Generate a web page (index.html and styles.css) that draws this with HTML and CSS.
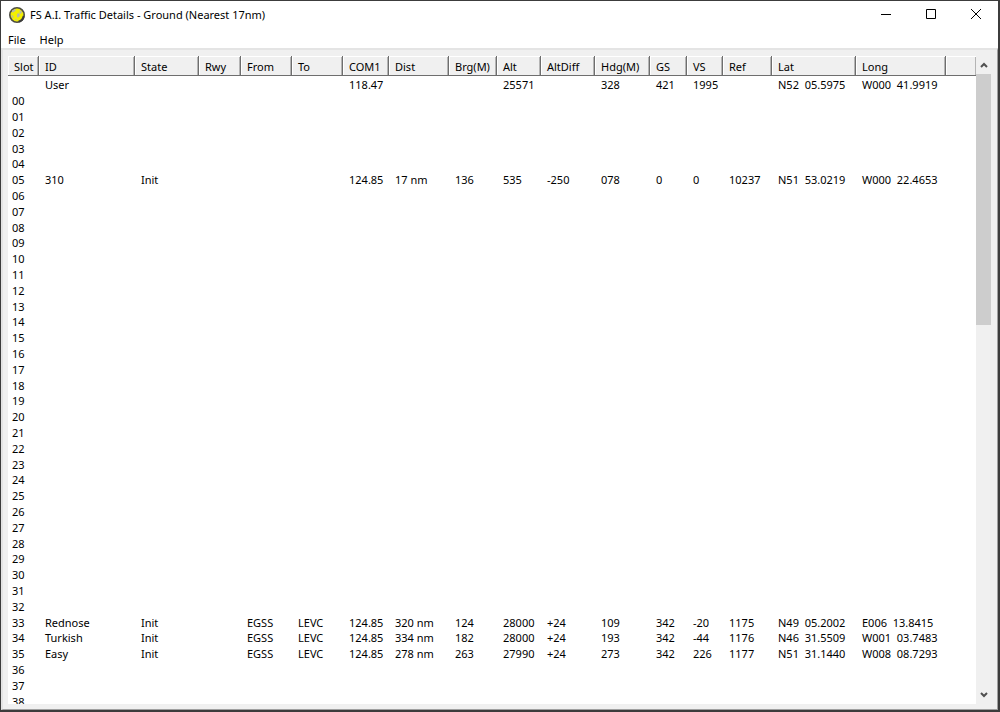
FILE: index.html
```html
<!DOCTYPE html>
<html lang="en">
<head>
<meta charset="utf-8">
<title>FS A.I. Traffic Details</title>
<link rel="stylesheet" href="styles.css">
</head>
<body>
<div class="window">
  <header class="titlebar">
    <svg class="app-icon" viewBox="0 0 16 16" aria-hidden="true">
      <circle cx="8" cy="8" r="7.2" fill="#f4f000" stroke="#4c4c44" stroke-width="1.600"/>
      <path d="M3 3.600 6 2l1 1-2 2-2 .5zM11 3l2 2-1 2-1.500-1zM2 8l2.500 1-.5 3zM8 7l2-1 1 2-1 2-2 .5zM6 12l2 .5-1 1.300z" fill="#b9b9a8"/>
      <path d="M9.500 14.600a7 7 0 0 0 5.200-5.600" fill="none" stroke="#3c3c3c" stroke-width="2"/>
    </svg>
    <h1 class="title">FS A.I. Traffic Details - Ground (Nearest 17nm)</h1>
    <div class="controls">
      <button class="control" type="button" aria-label="Minimize"><svg class="glyph" viewBox="0 0 12 12"><path d="M1 5.500h10"/></svg></button>
      <button class="control" type="button" aria-label="Maximize"><svg class="glyph" viewBox="0 0 12 12"><path d="M1.500 .5h9v9h-9z"/></svg></button>
      <button class="control" type="button" aria-label="Close"><svg class="glyph" viewBox="0 0 12 12"><path d="M1 0l10 10M11 0 1 10"/></svg></button>
    </div>
  </header>
  <nav class="menubar">
    <button class="menu" type="button">File</button>
    <button class="menu" type="button">Help</button>
  </nav>
  <main class="client">
    <div class="list">
      <table class="traffic">
        <colgroup>
          <col class="c-slot"><col class="c-id"><col class="c-state"><col class="c-rwy"><col class="c-from"><col class="c-to"><col class="c-com"><col class="c-dist"><col class="c-brg"><col class="c-alt"><col class="c-diff"><col class="c-hdg"><col class="c-gs"><col class="c-vs"><col class="c-ref"><col class="c-lat"><col class="c-long"><col>
        </colgroup>
        <thead>
          <tr><th>Slot</th><th>ID</th><th>State</th><th>Rwy</th><th>From</th><th>To</th><th>COM1</th><th>Dist</th><th>Brg(M)</th><th>Alt</th><th>AltDiff</th><th>Hdg(M)</th><th>GS</th><th>VS</th><th>Ref</th><th>Lat</th><th>Long</th><th></th></tr>
        </thead>
        <tbody id="rows"></tbody>
      </table>
    </div>
    <div class="scrollbar">
      <button class="arrow" type="button" aria-label="Scroll up"><svg class="chevron" viewBox="0 0 8 6"><path d="M1 5l3-3 3 3"/></svg></button>
      <div class="track"><div class="thumb"></div></div>
      <button class="arrow" type="button" aria-label="Scroll down"><svg class="chevron" viewBox="0 0 8 6"><path d="M1 1l3 3 3-3"/></svg></button>
    </div>
  </main>
</div>
<script src="app.js"></script>
</body>
</html>
```

FILE: styles.css
```css
* { box-sizing: border-box; }

body {
  margin: 0;
  font: 11px/16px "Noto Sans", "Open Sans", sans-serif;
  color: #000;
}

button {
  margin: 0;
  padding: 0;
  border: 0;
  background: none;
  font: inherit;
  color: inherit;
}

.window {
  display: flex;
  flex-direction: column;
  height: 100vh;
  border: solid #3c3c3c;
  border-width: 1px 2px 2px 1px;
  background: #fff;
}

.titlebar {
  display: flex;
  align-items: center;
  height: 28px;
  padding-left: 8px;
}

.app-icon { width: 16px; height: 16px; }

.title {
  flex: 1;
  margin: 0 0 0 5px;
  font-size: 11px;
  font-weight: 400;
}

.controls { display: flex; }

.control {
  display: grid;
  place-items: center;
  width: 45px;
  height: 28px;
}

.glyph {
  width: 12px;
  height: 12px;
  fill: none;
  stroke: #000;
}

.menubar {
  display: flex;
  gap: 14px;
  height: 19px;
  padding: 3px 7px 0;
}

.client {
  display: flex;
  flex: 1;
  min-height: 0;
  padding: 6px 5px 5px 5px;
  border: solid #e4e4e4;
  border-width: 2px 1px 1px 2px;
  border-right-color: #a0a0a0;
  border-bottom-color: #a0a0a0;
  background: #f0f0f0;
}

.list {
  flex: 1;
  overflow: hidden;
  background: #fff;
}

.traffic {
  width: 100%;
  table-layout: fixed;
  border-collapse: separate;
  border-spacing: 0;
}

.c-slot { width: 31px; }
.c-id { width: 96px; }
.c-state { width: 64px; }
.c-rwy { width: 42px; }
.c-from, .c-to { width: 51px; }
.c-com { width: 46px; }
.c-dist { width: 60px; }
.c-brg { width: 48px; }
.c-alt { width: 44px; }
.c-diff { width: 54px; }
.c-hdg { width: 55px; }
.c-gs { width: 37px; }
.c-vs { width: 36px; }
.c-ref { width: 49px; }
.c-lat { width: 84px; }
.c-long { width: 90px; }

.traffic th {
  height: 20px;
  padding: 2px 0 0 6px;
  border: solid #6e6e6e;
  border-width: 0 1px 1px 0;
  box-shadow: inset 1px 1px #fff, inset -1px 0 #b4b4b4;
  background: #f0f0f0;
  font-weight: 400;
  line-height: 16px;
  text-align: left;
  white-space: nowrap;
}

.traffic th:last-child { border-right: 0; }

.traffic td {
  height: 16px;
  padding: 0 0 0 6px;
  line-height: 15px;
  white-space: pre;
}

.traffic tr:nth-child(5n+1) td { height: 15px; }
.traffic tr:first-child td { height: 16px; padding-top: 1px; }
.traffic td:first-child { padding-left: 4px; }

.scrollbar {
  display: flex;
  flex-direction: column;
  width: 16px;
}

.arrow {
  display: grid;
  place-items: center;
  height: 18px;
}

.track { flex: 1; }

.thumb {
  width: 15px;
  height: 41%;
  background: #cdcdcd;
}

.chevron {
  width: 8px;
  height: 6px;
  fill: none;
  stroke: #505050;
  stroke-width: 2;
}
```

FILE: app.js
```js
const aircraft = {
  5: ["310", "Init", "", "", "", "124.85", "17 nm", "136", "535", "-250", "078", "0", "0", "10237", "N51  53.0219", "W000  22.4653"],
  33: ["Rednose", "Init", "", "EGSS", "LEVC", "124.85", "320 nm", "124", "28000", "+24", "109", "342", "-20", "1175", "N49  05.2002", "E006  13.8415"],
  34: ["Turkish", "Init", "", "EGSS", "LEVC", "124.85", "334 nm", "182", "28000", "+24", "193", "342", "-44", "1176", "N46  31.5509", "W001  03.7483"],
  35: ["Easy", "Init", "", "EGSS", "LEVC", "124.85", "278 nm", "263", "27990", "+24", "273", "342", "226", "1177", "N51  31.1440", "W008  08.7293"]
};
const user = ["User", "", "", "", "", "118.47", "", "", "25571", "", "328", "421", "1995", "", "N52  05.5975", "W000  41.9919"];

const rows = document.getElementById("rows");

function addRow(slot, values) {
  const row = rows.insertRow();
  row.insertCell().textContent = slot;
  for (let i = 0; i < 17; i++) row.insertCell().textContent = values[i] || "";
}

addRow("", user);
for (let slot = 0; slot <= 38; slot++) {
  addRow(String(slot).padStart(2, "0"), aircraft[slot] || []);
}
```
